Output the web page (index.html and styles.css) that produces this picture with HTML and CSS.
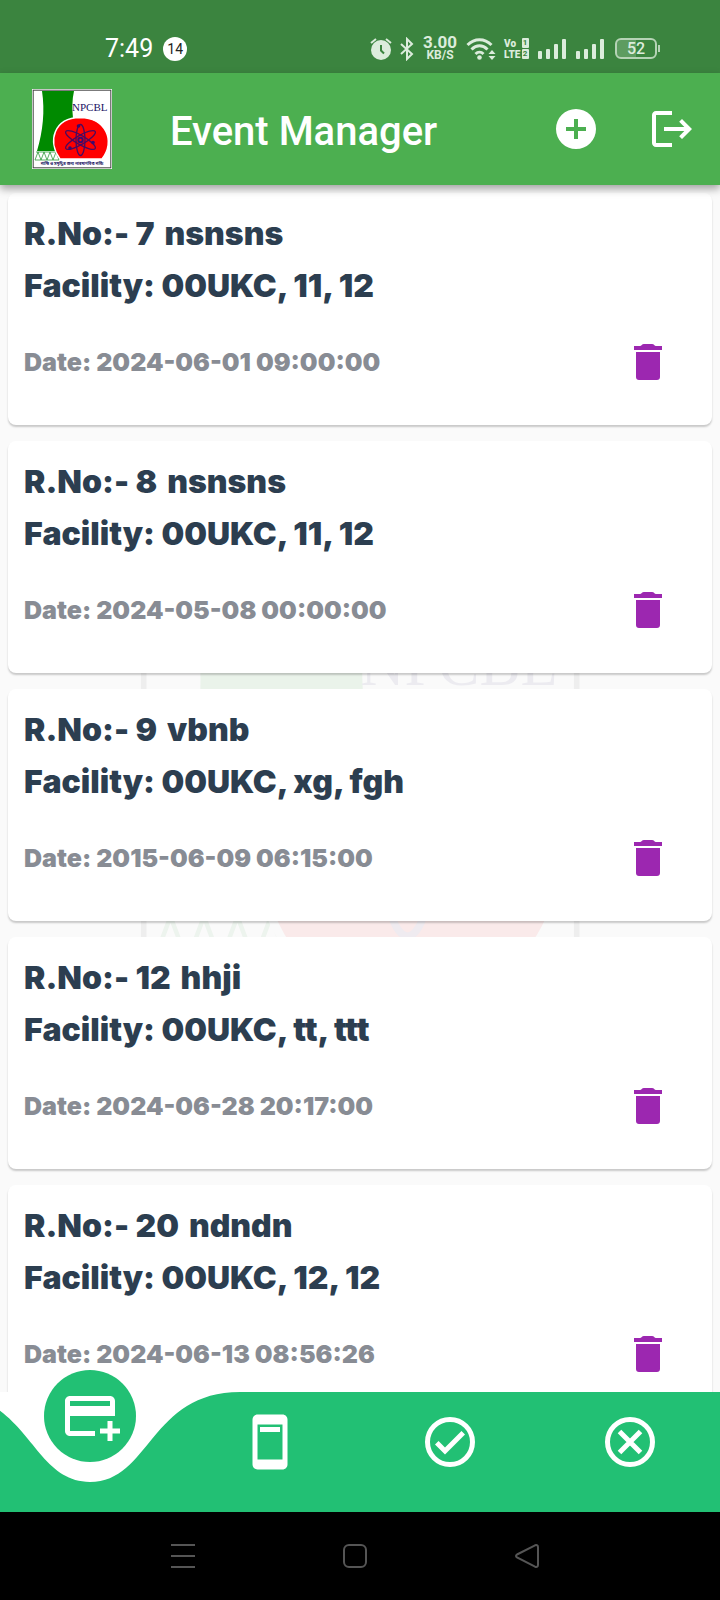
FILE: index.html
```html
<!DOCTYPE html>
<html lang="en">
<head>
<meta charset="utf-8">
<meta name="viewport" content="width=device-width, initial-scale=1">
<title>Event Manager</title>
<link rel="stylesheet" href="styles.css">
</head>
<body>
<svg class="defs" aria-hidden="true">
  <symbol id="logo" viewBox="0 0 80 80">
    <rect width="80" height="80" fill="#fff"/>
    <rect x="1.2" y="1.2" width="77.6" height="77.6" fill="#fff" stroke="#444" stroke-width="1"/>
    <path d="M10 2h32c-2 9-2 18-1 27l-13 33H5c6-20 8-40 5-60z" fill="#008a00"/>
    <path d="M3 71l3-8 3 8 3-8 3 8 3-8 3 8 3-8 3 8M3 71h24M4 63h24" fill="none" stroke="#2f9a3a" stroke-width=".8"/>
    <path d="M28 70C15 52 22 29 48 28.500C74 29 84 52 70 70z" fill="#f00" stroke="#fff" stroke-width="1.500"/>
    <g fill="none" stroke="#4a0a5e" stroke-width="1.300">
      <ellipse cx="48.500" cy="51" rx="4.500" ry="15.500"/>
      <ellipse cx="48.500" cy="51" rx="4.500" ry="17" transform="rotate(60 48.500 51)"/>
      <ellipse cx="48.500" cy="51" rx="4.500" ry="17" transform="rotate(120 48.500 51)"/>
    </g>
    <g fill="#3a0a6e">
      <circle cx="48.500" cy="51" r="3.200"/><circle cx="46.500" cy="37" r="1.800"/>
      <circle cx="61" cy="53.500" r="1.800"/><circle cx="38" cy="59" r="1.800"/>
    </g>
    <circle cx="48.500" cy="51" r="1.200" fill="#f00"/>
    <text class="logo-name" x="40" y="21.500">NPCBL</text>
    <text class="logo-motto" x="40" y="76" text-anchor="middle">শান্তি ও সমৃদ্ধির জন্য পারমাণবিক শক্তি</text>
  </symbol>
  <symbol id="trash" viewBox="0 0 24 24">
    <path d="M6 19.500c0 1 .6 1.500 1.500 1.500h9c.9 0 1.500-.5 1.500-1.500V7H6zM19 4h-3c-.8 0-.9-1-2-1h-4c-1.100 0-1.200 1-2 1H5v2h14z"/>
  </symbol>
  <symbol id="signal" viewBox="0 0 30 22">
    <rect x="1" y="13" width="4" height="8" rx="1"/><rect x="9" y="11" width="4" height="10" rx="1"/>
    <rect x="17" y="6" width="4" height="15" rx="1"/><rect x="25" y="1" width="4" height="20" rx="1"/>
  </symbol>
</svg>

<div class="status">
  <span class="time">7:49</span>
  <span class="count">14</span>
  <div class="indicators">
    <svg width="22" height="24" viewBox="0 0 22 24"><circle cx="11" cy="13" r="10"/><path d="M1 6l5-4M21 6l-5-4" class="line"/><path d="M11 8v5.500l3 3" fill="none" stroke="#3b843f" stroke-width="2"/></svg>
    <svg width="14" height="24" viewBox="0 0 14 24"><path d="M1 7l11 10-5 5V2l5 5L1 17" class="line"/></svg>
    <span class="speed"><b>3.00</b><small>KB/S</small></span>
    <svg width="30" height="24" viewBox="0 0 30 24"><path d="M1.500 8c7-7 17-7 24 0M5.500 12.500c5-5 11-5 16 0M9.500 17c2.500-2.500 5.500-2.500 8 0" class="wave"/><circle cx="13.500" cy="20.500" r="2.300"/><path d="M26 13l3.500 4h-7zM26 23l3.500-4h-7z"/></svg>
    <span class="volte"><b>Vo</b><i>1</i><b>LTE</b><i>2</i></span>
    <svg width="30" height="22"><use href="#signal"/></svg>
    <svg width="30" height="22"><use href="#signal"/></svg>
    <span class="battery">52</span>
  </div>
</div>

<header class="appbar">
  <svg class="logo" role="img" aria-label="NPCBL"><use href="#logo"/></svg>
  <h1>Event Manager</h1>
  <button type="button" aria-label="Add event"><svg viewBox="0 0 24 24"><path d="M12 2a10 10 0 1 0 0 20 10 10 0 0 0 0-20zm5 11h-4v4h-2v-4H7v-2h4V7h2v4h4z"/></svg></button>
  <button type="button" aria-label="Log out"><svg viewBox="0 0 24 24"><path d="M17 7l-1.410 1.410L18.170 11H8v2h10.170l-2.580 2.580L17 17l5-5zM4 5h8V3H4c-1.100 0-2 .9-2 2v14c0 1.100.9 2 2 2h8v-2H4z"/></svg></button>
</header>

<main class="content">
  <svg class="watermark" viewBox="0 0 80 80" aria-hidden="true"><use href="#logo"/></svg>
  <div class="list">
    <article class="card">
      <h2><span>R.No:- 7</span><span>nsnsns</span></h2>
      <p class="facility">Facility: 00UKC, 11, 12</p>
      <div class="row"><time>Date: 2024-06-01 09:00:00</time><button type="button" aria-label="Delete"><svg><use href="#trash"/></svg></button></div>
    </article>
    <article class="card">
      <h2><span>R.No:- 8</span><span>nsnsns</span></h2>
      <p class="facility">Facility: 00UKC, 11, 12</p>
      <div class="row"><time>Date: 2024-05-08 00:00:00</time><button type="button" aria-label="Delete"><svg><use href="#trash"/></svg></button></div>
    </article>
    <article class="card">
      <h2><span>R.No:- 9</span><span>vbnb</span></h2>
      <p class="facility">Facility: 00UKC, xg, fgh</p>
      <div class="row"><time>Date: 2015-06-09 06:15:00</time><button type="button" aria-label="Delete"><svg><use href="#trash"/></svg></button></div>
    </article>
    <article class="card">
      <h2><span>R.No:- 12</span><span>hhji</span></h2>
      <p class="facility">Facility: 00UKC, tt, ttt</p>
      <div class="row"><time>Date: 2024-06-28 20:17:00</time><button type="button" aria-label="Delete"><svg><use href="#trash"/></svg></button></div>
    </article>
    <article class="card">
      <h2><span>R.No:- 20</span><span>ndndn</span></h2>
      <p class="facility">Facility: 00UKC, 12, 12</p>
      <div class="row"><time>Date: 2024-06-13 08:56:26</time><button type="button" aria-label="Delete"><svg><use href="#trash"/></svg></button></div>
    </article>
  </div>
</main>

<nav class="tabs">
  <div class="tab">
    <svg class="notch" viewBox="0 0 300 90" aria-hidden="true"><path d="M0 0C90 0 90 90 150 90S210 0 300 0z"/></svg>
    <button type="button" class="active" aria-label="New card"><svg viewBox="0 0 24 24"><path d="M20 4H4c-1.110 0-2 .89-2 2v12c0 1.110.89 2 2 2h10v-2H4v-6h18V6c0-1.110-.89-2-2-2zm0 4H4V6h16zm4 9v2h-3v3h-2v-3h-3v-2h3v-3h2v3z"/></svg></button>
  </div>
  <button type="button" class="tab" aria-label="Device"><svg viewBox="0 0 24 24"><path d="M17 1H7c-1.100 0-2 .9-2 2v18c0 1.100.9 2 2 2h10c1.100 0 2-.9 2-2V3c0-1.100-.9-2-2-2zm0 18H7V5h10zM8 6h8v2H8z"/></svg></button>
  <button type="button" class="tab" aria-label="Approved"><svg viewBox="0 0 24 24"><circle cx="12" cy="12" r="9" class="ring"/><path d="M16.590 7.580L10 14.170l-2.590-2.580L6 13l4 4 8-8z"/></svg></button>
  <button type="button" class="tab" aria-label="Rejected"><svg viewBox="0 0 24 24"><circle cx="12" cy="12" r="9" class="ring"/><path d="M7.800 7.800l8.400 8.400M16.200 7.800l-8.400 8.400" class="ring"/></svg></button>
</nav>

<div class="system">
  <button type="button" aria-label="Recent"><svg viewBox="0 0 24 24"><path d="M0 1h24M0 12h24M0 23h24"/></svg></button>
  <button type="button" aria-label="Home"><svg viewBox="0 0 24 24"><rect x="1" y="1" width="22" height="22" rx="5"/></svg></button>
  <button type="button" aria-label="Back"><svg viewBox="0 0 24 24"><path d="M2 10.500L20 1.300q3-1 3 2v17.400q0 3-3 2L2 13.500q-2-1.500 0-3z"/></svg></button>
</div>
</body>
</html>
```
FILE: styles.css
```css
* { box-sizing: border-box; margin: 0; padding: 0; }
body {
  display: flex;
  flex-direction: column;
  height: 100vh;
  overflow: hidden;
  background: #fafafa;
  font-family: Roboto, sans-serif;
}
button { border: 0; background: none; display: flex; align-items: center; justify-content: center; cursor: pointer; }
.defs { position: absolute; width: 0; height: 0; overflow: visible; }

.status {
  display: flex;
  align-items: center;
  height: 73px;
  padding: 24px 60px 0 105px;
  background: #3b843f;
  color: #fff;
}
.time { font-size: 25px; }
.count {
  display: grid;
  place-items: center;
  width: 24px;
  height: 24px;
  margin-left: 10px;
  border-radius: 50%;
  background: #fff;
  color: #222;
  font-size: 14px;
}
.indicators { display: flex; align-items: center; gap: 8px; margin-left: auto; fill: #dcecdc; color: #dcecdc; }
.line { fill: none; stroke: #dcecdc; stroke-width: 2; }
.wave { fill: none; stroke: #dcecdc; stroke-width: 3; }
.speed { display: flex; flex-direction: column; align-items: center; width: 36px; }
.speed b { font-size: 17px; line-height: 13px; font-weight: 700; }
.speed small { font-size: 12px; line-height: 12px; font-weight: 700; }
.volte { display: grid; grid-template-columns: auto auto; column-gap: 1px; align-items: center; width: 25px; font-size: 10px; line-height: 11px; font-weight: 700; }
.volte i { font-style: normal; font-size: 8px; line-height: 10px; width: 7px; text-align: center; border-radius: 1px; background: #dcecdc; color: #3b843f; }
.battery {
  position: relative;
  width: 42px;
  height: 21px;
  margin: 0 3px 0 2px;
  border: 2px solid #b5d3b5;
  border-radius: 6px;
  background: linear-gradient(90deg, #5d9c60 50%, transparent 50%);
  font-size: 16px;
  line-height: 17px;
  font-weight: 500;
  text-align: center;
}
.battery::after { content: ""; position: absolute; right: -5px; top: 5px; width: 2px; height: 7px; background: #b5d3b5; }

.appbar {
  display: flex;
  align-items: center;
  height: 112px;
  padding: 0 0 0 32px;
  background: #4caf50;
  color: #fff;
  box-shadow: 0 4px 8px rgba(0, 0, 0, .35);
  z-index: 2;
}
.logo { width: 80px; height: 80px; }
.logo-name { font: 11px "Liberation Serif", serif; fill: #1b1464; }
.logo-motto { font: bold 4px "Noto Sans Bengali", "Noto Sans", sans-serif; fill: #1b1464; }
.appbar h1 { flex: 1; margin-left: 58px; padding-top: 5px; font-size: 40px; line-height: 48px; font-weight: 500; }
.appbar button { width: 96px; height: 96px; }
.appbar button + button { margin-right: 0; }
.appbar button svg { width: 48px; height: 48px; fill: #fff; }

.content { position: relative; flex: 1; min-height: 0; }
.watermark { position: absolute; inset: 0; margin: auto; width: 62%; opacity: .06; }
.list {
  position: relative;
  display: flex;
  flex-direction: column;
  gap: 16px;
  height: 100%;
  padding: 8px;
  overflow-y: auto;
  scrollbar-width: none;
}
.card {
  flex: none;
  padding: 15px 16px 13px;
  border-radius: 8px;
  background: #fff;
  box-shadow: 0 2px 2px rgba(0, 0, 0, .2);
  color: #2c3e50;
  font-family: Inter, sans-serif;
}
.card h2 { display: flex; gap: 10px; }
.card h2, .facility { font-size: 32px; line-height: 52px; font-weight: 900; }
.row { display: flex; align-items: center; justify-content: space-between; height: 100px; }
.row time { font-size: 25px; line-height: 40px; font-weight: 900; color: #888c94; }
.row button { width: 96px; height: 96px; }
.row svg { width: 48px; height: 48px; fill: #9c27b0; }

.tabs { position: relative; z-index: 1; display: grid; grid-template-columns: repeat(4, 1fr); height: 120px; background: #22c074; }
.tab { position: relative; padding-bottom: 20px; }
.tab svg { width: 60px; height: 60px; fill: #fff; }
.tab .notch { position: absolute; top: 0; left: 50%; width: 300px; height: 90px; margin-left: -150px; }
.active {
  position: absolute;
  top: -22px;
  left: 50%;
  width: 92px;
  height: 92px;
  margin-left: -46px;
  border-radius: 50%;
  background: #22c074;
}
.tab .ring { fill: none; stroke: #fff; stroke-width: 2; }

.system { display: flex; align-items: center; justify-content: center; gap: 148px; height: 88px; padding-right: 10px; background: #000; }
.system svg { width: 24px; height: 24px; fill: none; stroke: #555; stroke-width: 2; }
```
